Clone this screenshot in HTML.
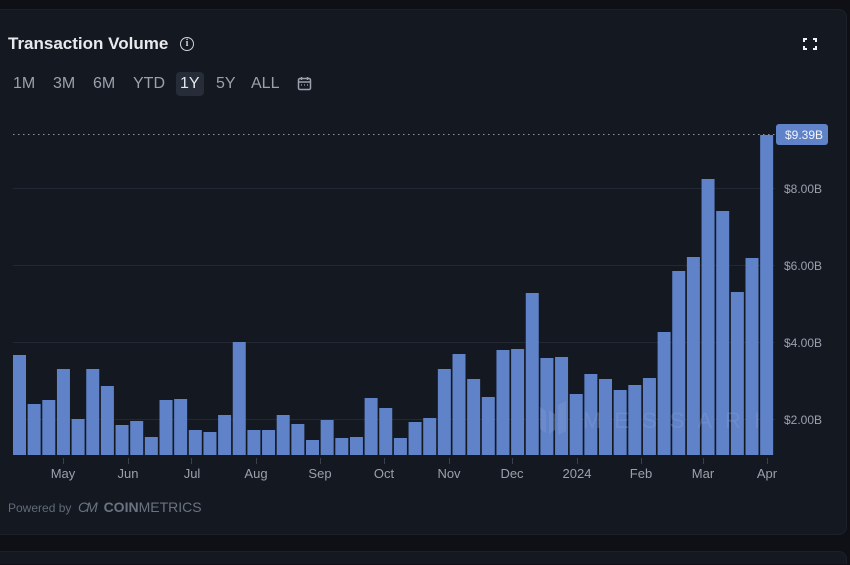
<!DOCTYPE html>
<html style="width:850px;height:565px;overflow:hidden"><head><meta charset="utf-8"><style>
body{margin:0;width:850px;height:565px;background:#0e1015;overflow:hidden;font-family:"Liberation Sans",sans-serif;position:relative}
.card{position:absolute;left:-10px;top:9px;width:855px;height:524px;background:#141820;border:1px solid #1c2029;border-radius:8px}
.card2{position:absolute;left:-10px;top:551px;width:855px;height:12px;background:#141820;border:1px solid #1c2029;border-bottom:none;border-radius:8px 8px 0 0}
.title{position:absolute;left:8px;top:34px;font-size:17px;font-weight:bold;color:#e8eaee}
.info{position:absolute;left:180px;top:37px;width:12px;height:12px;border:1.5px solid #cfd3da;border-radius:50%;color:#cfd3da;font-size:10px;font-weight:bold;text-align:center;line-height:12px;font-family:"Liberation Serif",serif}
.tabs{position:absolute;top:72px;left:0;font-size:16px;color:#9aa1ad}
.tabs span{position:absolute;top:0;padding:3px 5px;border-radius:4px;white-space:nowrap}
.sel{background:#262c38;color:#e4e7ec}
.pw{position:absolute;left:8px;top:501px;font-size:12px;color:#626a78}
.cm{position:absolute;left:78px;top:499px;font-size:14px;color:#6b7382}
</style></head><body>
<div class="card"></div><div class="card2"></div>
<div class="title">Transaction Volume</div>
<div class="info">i</div>
<svg style="position:absolute;left:802px;top:37px" width="16" height="14" viewBox="0 0 16 14"><path d="M2 5V2H5M11 2H14V5M14 9V12H11M5 12H2V9" stroke="#f0f2f5" stroke-width="2" fill="none"/></svg>
<div class="tabs">
<span style="left:8px">1M</span><span style="left:48px">3M</span><span style="left:88px">6M</span><span style="left:128px">YTD</span><span class="sel" style="left:176px;padding:3px 4px">1Y</span><span style="left:211px">5Y</span><span style="left:246px">ALL</span>
</div>
<svg style="position:absolute;left:297px;top:76px" width="15" height="15" viewBox="0 0 15 15"><rect x="1.5" y="2.5" width="12" height="11" rx="1.5" stroke="#9aa1ad" stroke-width="1.5" fill="none"/><path d="M1.5 6H13.5M4.5 1V4M10.5 1V4" stroke="#9aa1ad" stroke-width="1.5"/><path d="M4 9H5M7 9H8M10 9H11" stroke="#9aa1ad" stroke-width="1.3"/></svg>
<svg style="position:absolute;left:0;top:0" width="850" height="565">
<g stroke="#232834" stroke-width="1">
<line x1="13" y1="188.5" x2="775" y2="188.5"/><line x1="13" y1="265.5" x2="775" y2="265.5"/><line x1="13" y1="342.5" x2="775" y2="342.5"/><line x1="13" y1="419.5" x2="775" y2="419.5"/>
</g>
<line x1="13" y1="134.5" x2="778" y2="134.5" stroke="#8a93a3" stroke-dasharray="1.5,3.5"/>
<g fill="#5f82c8">
<rect x="13" y="355" width="13" height="100"/><rect x="27.65" y="404" width="13" height="51"/><rect x="42.3" y="400" width="13" height="55"/><rect x="56.95" y="369" width="13" height="86"/><rect x="71.6" y="419" width="13" height="36"/><rect x="86.25" y="369" width="13" height="86"/><rect x="100.9" y="386" width="13" height="69"/><rect x="115.55" y="425" width="13" height="30"/><rect x="130.2" y="421" width="13" height="34"/><rect x="144.85" y="437" width="13" height="18"/><rect x="159.5" y="400" width="13" height="55"/><rect x="174.15" y="399" width="13" height="56"/><rect x="188.8" y="430" width="13" height="25"/><rect x="203.45" y="432" width="13" height="23"/><rect x="218.1" y="415" width="13" height="40"/><rect x="232.75" y="342" width="13" height="113"/><rect x="247.4" y="430" width="13" height="25"/><rect x="262.05" y="430" width="13" height="25"/><rect x="276.7" y="415" width="13" height="40"/><rect x="291.35" y="424" width="13" height="31"/><rect x="306" y="440" width="13" height="15"/><rect x="320.65" y="420" width="13" height="35"/><rect x="335.3" y="438" width="13" height="17"/><rect x="349.95" y="437" width="13" height="18"/><rect x="364.6" y="398" width="13" height="57"/><rect x="379.25" y="408" width="13" height="47"/><rect x="393.9" y="438" width="13" height="17"/><rect x="408.55" y="422" width="13" height="33"/><rect x="423.2" y="418" width="13" height="37"/><rect x="437.85" y="369" width="13" height="86"/><rect x="452.5" y="354" width="13" height="101"/><rect x="467.15" y="379" width="13" height="76"/><rect x="481.8" y="397" width="13" height="58"/><rect x="496.45" y="350" width="13" height="105"/><rect x="511.1" y="349" width="13" height="106"/><rect x="525.75" y="293" width="13" height="162"/><rect x="540.4" y="358" width="13" height="97"/><rect x="555.05" y="357" width="13" height="98"/><rect x="569.7" y="394" width="13" height="61"/><rect x="584.35" y="374" width="13" height="81"/><rect x="599" y="379" width="13" height="76"/><rect x="613.65" y="390" width="13" height="65"/><rect x="628.3" y="385" width="13" height="70"/><rect x="642.95" y="378" width="13" height="77"/><rect x="657.6" y="332" width="13" height="123"/><rect x="672.25" y="271" width="13" height="184"/><rect x="686.9" y="257" width="13" height="198"/><rect x="701.55" y="179" width="13" height="276"/><rect x="716.2" y="211" width="13" height="244"/><rect x="730.85" y="292" width="13" height="163"/><rect x="745.5" y="258" width="13" height="197"/><rect x="760.15" y="135" width="13" height="320"/>
</g>
<g fill="#8aa3d6" opacity="0.3"><path d="M540 407l6 4v22l-6-4zM549 410l6 4v16l-6 4zM558 405l8-4v30l-8 4z"/></g>
<text x="583" y="428" font-size="22" fill="#8aa3d6" opacity="0.3" letter-spacing="13" font-family="Liberation Sans">MESSARI</text>
<g stroke="#3a404c"><line x1="63.5" y1="458" x2="63.5" y2="464"/><line x1="128.5" y1="458" x2="128.5" y2="464"/><line x1="191.5" y1="458" x2="191.5" y2="464"/><line x1="256.5" y1="458" x2="256.5" y2="464"/><line x1="320.5" y1="458" x2="320.5" y2="464"/><line x1="384.5" y1="458" x2="384.5" y2="464"/><line x1="449.5" y1="458" x2="449.5" y2="464"/><line x1="512.5" y1="458" x2="512.5" y2="464"/><line x1="577.5" y1="458" x2="577.5" y2="464"/><line x1="641.5" y1="458" x2="641.5" y2="464"/><line x1="703.5" y1="458" x2="703.5" y2="464"/><line x1="767.5" y1="458" x2="767.5" y2="464"/></g>
<g fill="#9aa1ad" font-size="13" text-anchor="middle" font-family="Liberation Sans">
<text x="63" y="478">May</text><text x="128" y="478">Jun</text><text x="192" y="478">Jul</text><text x="256" y="478">Aug</text><text x="320" y="478">Sep</text><text x="384" y="478">Oct</text><text x="449" y="478">Nov</text><text x="512" y="478">Dec</text><text x="577" y="478">2024</text><text x="641" y="478">Feb</text><text x="703" y="478">Mar</text><text x="767" y="478">Apr</text>
</g>
<g fill="#9aa1ad" font-size="12" font-family="Liberation Sans">
<text x="784" y="193">$8.00B</text><text x="784" y="270">$6.00B</text><text x="784" y="347">$4.00B</text><text x="784" y="424">$2.00B</text>
</g>
<rect x="776" y="124" width="52" height="21" rx="3" fill="#5f82c8"/>
<text x="785" y="139" font-size="12" fill="#f2f4f8" font-family="Liberation Sans">$9.39B</text>
</svg>
<div class="pw">Powered by</div>
<div class="cm"><span style="font-style:italic;letter-spacing:-2px">CM</span>&nbsp; <b>COIN</b>METRICS</div>
</body></html>
